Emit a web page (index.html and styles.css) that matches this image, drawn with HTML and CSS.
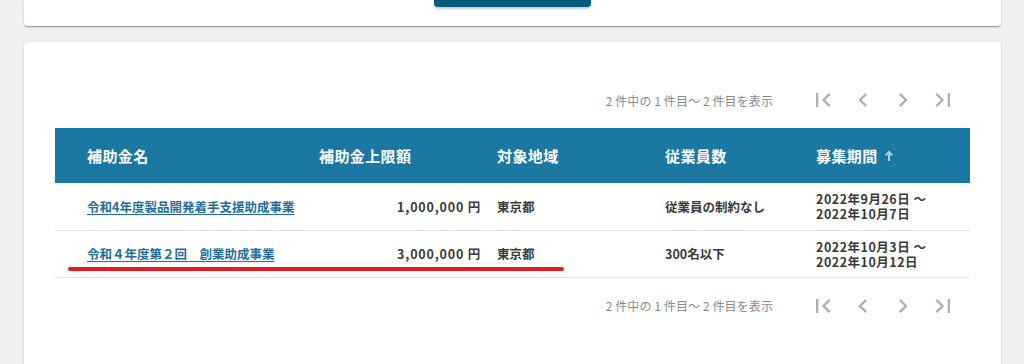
FILE: index.html
```html
<!DOCTYPE html>
<html lang="ja">
<head>
<meta charset="utf-8">
<title>補助金一覧</title>
<link rel="stylesheet" href="styles.css">
</head>
<body>
<div class="page">
  <section class="card card-top">
    <div class="top-actions">
      <button class="primary-btn" type="button" aria-label="検索"></button>
    </div>
  </section>

  <section class="card card-list">
    <div class="paginator">
      <span class="range">2 件中の 1 件目～ 2 件目を表示</span>
      <div class="pager-btns">
        <button class="pg" type="button" aria-label="最初のページ"><svg viewBox="0 0 24 24" class="pg-icon"><path d="M18.41 16.59L13.82 12l4.59-4.59L17 6l-6 6 6 6zM6 6h2v12H6z"/></svg></button>
        <button class="pg" type="button" aria-label="前のページ"><svg viewBox="0 0 24 24" class="pg-icon"><path d="M15.41 7.41L14 6l-6 6 6 6 1.41-1.41L10.83 12z"/></svg></button>
        <button class="pg" type="button" aria-label="次のページ"><svg viewBox="0 0 24 24" class="pg-icon"><path d="M10 6L8.59 7.41 13.17 12l-4.58 4.59L10 18l6-6z"/></svg></button>
        <button class="pg" type="button" aria-label="最後のページ"><svg viewBox="0 0 24 24" class="pg-icon"><path d="M5.59 7.41L10.18 12l-4.59 4.59L7 18l6-6-6-6zM16 6h2v12h-2z"/></svg></button>
      </div>
    </div>

    <table class="grid">
      <colgroup>
        <col class="c1"><col class="c2"><col class="c3"><col class="c4"><col class="c5">
      </colgroup>
      <thead>
        <tr>
          <th class="first">補助金名</th>
          <th>補助金上限額</th>
          <th>対象地域</th>
          <th>従業員数</th>
          <th><span class="sort">募集期間<svg class="sort-arrow" viewBox="0 0 10 12"><path d="M5 11V2.2M1.6 5.4L5 2l3.4 3.4"/></svg></span></th>
        </tr>
      </thead>
      <tbody>
        <tr>
          <td class="first"><a href="#" class="name-link">令和4年度製品開発着手支援助成事業</a></td>
          <td class="amount">1,000,000 円</td>
          <td>東京都</td>
          <td>従業員の制約なし</td>
          <td class="period"><span class="line">2022年9月26日 ～</span><span class="line">2022年10月7日</span></td>
        </tr>
        <tr>
          <td class="first"><a href="#" class="name-link">令和４年度第２回　創業助成事業</a></td>
          <td class="amount">3,000,000 円</td>
          <td>東京都</td>
          <td>300名以下</td>
          <td class="period"><span class="line">2022年10月3日 ～</span><span class="line">2022年10月12日</span></td>
        </tr>
      </tbody>
    </table>

    <div class="paginator">
      <span class="range">2 件中の 1 件目～ 2 件目を表示</span>
      <div class="pager-btns">
        <button class="pg" type="button" aria-label="最初のページ"><svg viewBox="0 0 24 24" class="pg-icon"><path d="M18.41 16.59L13.82 12l4.59-4.59L17 6l-6 6 6 6zM6 6h2v12H6z"/></svg></button>
        <button class="pg" type="button" aria-label="前のページ"><svg viewBox="0 0 24 24" class="pg-icon"><path d="M15.41 7.41L14 6l-6 6 6 6 1.41-1.41L10.83 12z"/></svg></button>
        <button class="pg" type="button" aria-label="次のページ"><svg viewBox="0 0 24 24" class="pg-icon"><path d="M10 6L8.59 7.41 13.17 12l-4.58 4.59L10 18l6-6z"/></svg></button>
        <button class="pg" type="button" aria-label="最後のページ"><svg viewBox="0 0 24 24" class="pg-icon"><path d="M5.59 7.41L10.18 12l-4.59 4.59L7 18l6-6-6-6zM16 6h2v12h-2z"/></svg></button>
      </div>
    </div>

    <div class="mark-line"></div>
  </section>
</div>
</body>
</html>
```

FILE: styles.css
```css
* { box-sizing: border-box; }

html, body {
  margin: 0;
  padding: 0;
  background: #f0f0f0;
  font-family: "Noto Sans CJK JP", "Noto Sans", sans-serif;
  color: #3a3a3a;
  overflow: hidden;
}

.page {
  padding: 0 23px 0 24px;
  display: flex;
  flex-direction: column;
  gap: 16px;
}

.card {
  background: #fff;
  box-shadow: 0 2px 1px -1px rgba(0,0,0,.2), 0 1px 1px 0 rgba(0,0,0,.14), 0 1px 3px 0 rgba(0,0,0,.12);
}

.card-top {
  height: 26px;
  border-radius: 0 0 4px 4px;
}

.top-actions {
  display: flex;
  justify-content: center;
}

.primary-btn {
  width: 157px;
  height: 7px;
  border: 0;
  padding: 0;
  background: #005b7f;
  border-radius: 0 0 4px 4px;
  box-shadow: 0 2px 2px rgba(0,0,0,.2);
}

.card-list {
  position: relative;
  border-radius: 4px;
  padding: 30px 31px 60px 31px;
  min-height: 340px;
}

.paginator {
  height: 56px;
  display: flex;
  align-items: center;
  justify-content: flex-end;
  padding-right: 7px;
}

.range {
  font-size: 12px;
  color: #8a8a8a;
  margin-right: 30px;
  white-space: nowrap;
  letter-spacing: 0.1px;
}

.pager-btns {
  display: flex;
}

.pg {
  width: 40px;
  height: 40px;
  border: 0;
  padding: 0;
  background: transparent;
  display: flex;
  align-items: center;
  justify-content: center;
}

.pg-icon {
  width: 28px;
  height: 28px;
  fill: #b0b0b0;
}

.grid {
  width: 100%;
  border-collapse: collapse;
  table-layout: fixed;
}

.c1 { width: 248px; }
.c2 { width: 178px; }
.c3 { width: 168px; }
.c4 { width: 151px; }
.c5 { width: 170px; }

.grid th {
  background: #1b78a2;
  color: #fff;
  font-size: 15px;
  font-weight: 700;
  text-align: left;
  height: 55px;
  padding: 0 0 0 16px;
  white-space: nowrap;
  letter-spacing: 0.4px;
}

.grid th.first,
.grid td.first {
  padding-left: 32px;
}

.sort {
  display: inline-flex;
  align-items: center;
  gap: 6px;
}

.sort-arrow {
  width: 10px;
  height: 12px;
  fill: none;
  stroke: rgba(255,255,255,.65);
  stroke-width: 2;
}

.grid td {
  height: 47px;
  padding: 0 0 0 16px;
  font-size: 12.5px;
  font-weight: 700;
  color: #3a3a3a;
  border-bottom: 1px solid #e2e2e2;
  vertical-align: middle;
  line-height: 15px;
  white-space: nowrap;
}

.grid td.amount {
  text-align: right;
  padding-left: 0;
  letter-spacing: 0.8px;
}

.grid td.period {
  letter-spacing: 0.5px;
}

.line {
  display: block;
  height: 15px;
  line-height: 15px;
}

.name-link {
  color: #1f6e9e;
  text-decoration: underline;
  text-underline-offset: 2px;
}

.mark-line {
  position: absolute;
  left: 44px;
  top: 225px;
  width: 496px;
  height: 4px;
  border-radius: 2px;
  background: #e61a1f;
}
```
